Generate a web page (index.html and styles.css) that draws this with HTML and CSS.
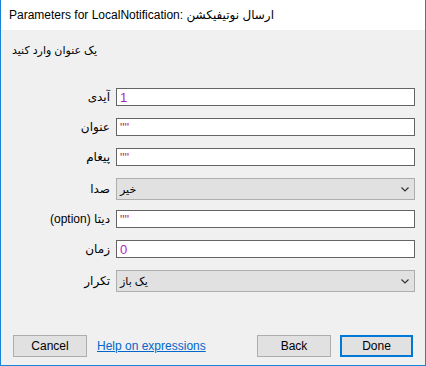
FILE: index.html
```html
<!DOCTYPE html>
<html lang="fa">
<head>
    <meta charset="UTF-8">
    <title>Parameters for LocalNotification</title>
    <link rel="stylesheet" href="styles.css">
</head>
<body>
    <div class="window">
        <div class="titlebar">Parameters for LocalNotification: ارسال نوتیفیکشن</div>

        <div class="content">
            <div class="subtitle" dir="rtl">یک عنوان وارد کنید</div>

            <div class="form">
                <div class="row">
                    <span class="label" dir="rtl">آیدی</span>
                    <div class="field"><span class="num">1</span></div>
                </div>
                <div class="row">
                    <span class="label" dir="rtl">عنوان</span>
                    <div class="field"><span class="str">""</span></div>
                </div>
                <div class="row">
                    <span class="label" dir="rtl">پیغام</span>
                    <div class="field"><span class="str">""</span></div>
                </div>
                <div class="row row-select">
                    <span class="label" dir="rtl">صدا</span>
                    <div class="select">
                        <span dir="rtl">خیر</span>
                        <svg class="chevron" width="8" height="5" viewBox="0 0 8 5"><polyline points="0.5,0.5 4,4 7.5,0.5" fill="none" stroke="#333" stroke-width="1.2"/></svg>
                    </div>
                </div>
                <div class="row">
                    <span class="label" dir="rtl">دیتا (option)</span>
                    <div class="field"><span class="str">""</span></div>
                </div>
                <div class="row">
                    <span class="label" dir="rtl">زمان</span>
                    <div class="field"><span class="num">0</span></div>
                </div>
                <div class="row">
                    <span class="label" dir="rtl">تکرار</span>
                    <div class="select">
                        <span dir="rtl">یک باز</span>
                        <svg class="chevron" width="8" height="5" viewBox="0 0 8 5"><polyline points="0.5,0.5 4,4 7.5,0.5" fill="none" stroke="#333" stroke-width="1.2"/></svg>
                    </div>
                </div>
            </div>

            <div class="footer">
                <button class="btn">Cancel</button>
                <a class="help-link" href="#">Help on expressions</a>
                <span class="spacer"></span>
                <button class="btn">Back</button>
                <button class="btn btn-default">Done</button>
            </div>
        </div>
    </div>
</body>
</html>
```

FILE: styles.css
```css
body {
    margin: 0;
    padding: 0;
    font-family: 'Liberation Sans', 'DejaVu Sans', sans-serif;
    font-size: 12px;
    color: #000;
}

.window {
    width: 426px;
    height: 366px;
    box-sizing: border-box;
    border: 1px solid #1883d7;
    border-top: none;
    background-color: #f0f0f0;
    display: flex;
    flex-direction: column;
}

.titlebar {
    height: 30px;
    background-color: #ffffff;
    padding-left: 8px;
    display: flex;
    align-items: center;
    font-size: 12px;
    color: #000;
}

.content {
    flex: 1;
    display: flex;
    flex-direction: column;
}

.subtitle {
    align-self: flex-start;
    margin: 12px 0 0 11px;
    font-size: 11px;
    line-height: 16px;
}

.form {
    display: flex;
    flex-direction: column;
    gap: 12px;
    margin-top: 30px;
}

.row {
    display: flex;
    align-items: center;
}

.row-select {
    margin-bottom: -2px;
}

.label {
    width: 109px;
    padding-right: 6px;
    text-align: right;
    font-size: 12px;
    white-space: nowrap;
}

.field {
    width: 299px;
    height: 18px;
    box-sizing: border-box;
    border: 1px solid #646464;
    background-color: #fff;
    padding-left: 3px;
    display: flex;
    align-items: center;
    font-size: 13px;
}

.num {
    color: #b01ec0;
}

.str {
    color: #c8325a;
}

.select {
    width: 299px;
    height: 22px;
    box-sizing: border-box;
    border: 1px solid #adadad;
    background-color: #e1e1e1;
    padding: 0 5px 0 3px;
    display: flex;
    align-items: center;
    justify-content: space-between;
    font-size: 11px;
}

.footer {
    margin-top: auto;
    margin-bottom: 8px;
    padding: 0 12px 0 12px;
    display: flex;
    align-items: center;
    gap: 9px;
}

.btn {
    width: 74px;
    height: 22px;
    box-sizing: border-box;
    border: 1px solid #adadad;
    background-color: #e1e1e1;
    font-family: 'Liberation Sans', 'DejaVu Sans', sans-serif;
    font-size: 12px;
    color: #000;
    padding: 0;
}

.btn-default {
    border: 2px solid #0078d7;
    width: 73px;
}

.help-link {
    color: #0066cc;
    text-decoration: underline;
    font-size: 12px;
    margin-left: 1px;
}

.spacer {
    flex: 1;
}
```
